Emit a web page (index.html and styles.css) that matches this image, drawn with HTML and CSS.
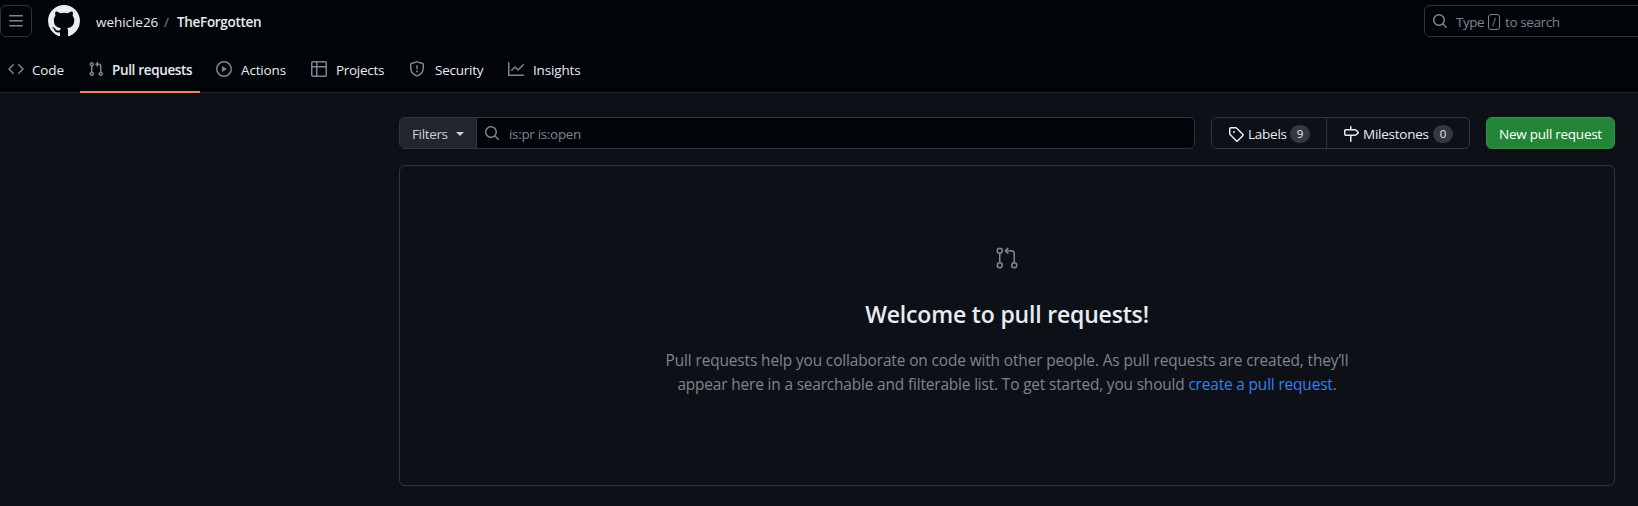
FILE: index.html
```html
<!DOCTYPE html>
<html lang="en">
<head>
<meta charset="utf-8">
<title>Pull requests · wehicle26/TheForgotten</title>
<link rel="stylesheet" href="styles.css">
</head>
<body>
<header class="header">
  <div class="topbar">
    <button class="menu-button" aria-label="Menu"><svg width="16" height="16" viewBox="0 0 16 16"><path d="M1 2.75A.75.75 0 0 1 1.75 2h12.5a.75.75 0 0 1 0 1.5H1.75A.75.75 0 0 1 1 2.75Zm0 5A.75.75 0 0 1 1.75 7h12.5a.75.75 0 0 1 0 1.5H1.75A.75.75 0 0 1 1 7.75ZM1.75 12h12.5a.75.75 0 0 1 0 1.5H1.75a.75.75 0 0 1 0-1.5Z"/></svg></button>
    <svg class="logo" width="32" height="32" viewBox="0 0 16 16"><path d="M8 0c4.42 0 8 3.58 8 8a8.013 8.013 0 0 1-5.45 7.59c-.4.08-.55-.17-.55-.38 0-.27.01-1.13.01-2.2 0-.75-.25-1.23-.54-1.48 1.78-.2 3.65-.88 3.65-3.95 0-.88-.31-1.59-.82-2.15.08-.2.36-1.02-.08-2.12 0 0-.67-.22-2.2.82-.64-.18-1.32-.27-2-.27-.68 0-1.36.09-2 .27-1.53-1.03-2.2-.82-2.2-.82-.44 1.1-.16 1.92-.08 2.12-.51.56-.82 1.28-.82 2.15 0 3.06 1.86 3.75 3.64 3.95-.23.2-.44.55-.51 1.07-.46.21-1.61.55-2.33-.66-.15-.24-.6-.83-1.23-.82-.67.01-.27.38.01.53.34.19.73.9.82 1.13.16.45.68 1.31 2.69.94 0 .67.01 1.3.01 1.49 0 .21-.15.45-.55.38A7.995 7.995 0 0 1 0 8c0-4.42 3.58-8 8-8Z"/></svg>
    <nav class="crumbs"><span class="owner">wehicle26</span><span class="slash">/</span><strong class="repo">TheForgotten</strong></nav>
    <div class="search"><svg width="16" height="16" viewBox="0 0 16 16"><path d="M10.68 11.74a6 6 0 0 1-7.922-8.982 6 6 0 0 1 8.982 7.922l3.04 3.04a.749.749 0 1 1-1.06 1.06ZM11.5 7a4.499 4.499 0 1 0-8.997 0A4.499 4.499 0 0 0 11.5 7Z"/></svg><span class="type">Type</span><kbd>/</kbd><span class="tosearch">to search</span></div>
  </div>
  <nav class="tabs">
    <a class="tab tab-code"><svg width="16" height="16" viewBox="0 0 16 16"><path d="m11.28 3.22 4.25 4.25a.75.75 0 0 1 0 1.06l-4.25 4.25a.749.749 0 1 1-1.06-1.06L13.94 8l-3.72-3.72a.749.749 0 1 1 1.06-1.06Zm-6.56 0a.751.751 0 0 1 1.06 1.06L2.06 8l3.72 3.72a.749.749 0 1 1-1.06 1.06L.47 8.53a.75.75 0 0 1 0-1.06Z"/></svg><span>Code</span></a>
    <a class="tab tab-pulls"><svg width="16" height="16" viewBox="0 0 16 16"><path d="M1.5 3.25a2.25 2.25 0 1 1 3 2.122v5.256a2.251 2.251 0 1 1-1.5 0V5.372A2.25 2.25 0 0 1 1.5 3.25Zm5.677-.177L9.573.677A.25.25 0 0 1 10 .854V2.5h1A2.5 2.5 0 0 1 13.500 5v5.628a2.251 2.251 0 1 1-1.5 0V5a1 1 0 0 0-1-1h-1v1.646a.25.25 0 0 1-.427.177L7.177 3.427a.25.25 0 0 1 0-.354ZM3.75 2.500a.75.75 0 1 0 0 1.5.75.75 0 0 0 0-1.5Zm0 9.500a.75.75 0 1 0 0 1.5.75.75 0 0 0 0-1.5Zm8.250.750a.75.75 0 1 0 1.5 0 .75.75 0 0 0-1.5 0Z"/></svg><span>Pull requests</span></a>
    <a class="tab tab-actions"><svg width="16" height="16" viewBox="0 0 16 16"><path d="M8 0a8 8 0 1 1 0 16A8 8 0 0 1 8 0ZM1.500 8a6.500 6.500 0 1 0 13 0 6.500 6.500 0 0 0-13 0Zm4.879-2.773 4.264 2.559a.25.25 0 0 1 0 .428l-4.264 2.559A.25.25 0 0 1 6 10.559V5.442a.25.25 0 0 1 .379-.215Z"/></svg><span>Actions</span></a>
    <a class="tab tab-projects"><svg width="16" height="16" viewBox="0 0 16 16"><path d="M0 1.750C0 .784.784 0 1.750 0h12.500C15.216 0 16 .784 16 1.750v12.500A1.750 1.750 0 0 1 14.250 16H1.750A1.750 1.750 0 0 1 0 14.250ZM6.500 6.500v8h7.750a.25.25 0 0 0 .25-.25V6.500Zm8-1.500V1.750a.25.25 0 0 0-.25-.25H6.500V5Zm-13 1.500v7.750c0 .138.112.25.25.25H5v-8ZM5 5V1.500H1.750a.25.25 0 0 0-.25.25V5Z"/></svg><span>Projects</span></a>
    <a class="tab tab-security"><svg width="16" height="16" viewBox="0 0 16 16"><path d="M7.467.133a1.748 1.748 0 0 1 1.066 0l5.250 1.680A1.750 1.750 0 0 1 15 3.480V7c0 1.566-.320 3.182-1.303 4.682-.983 1.498-2.585 2.813-5.032 3.855a1.697 1.697 0 0 1-1.330 0c-2.447-1.042-4.049-2.357-5.032-3.855C1.320 10.182 1 8.566 1 7V3.480a1.755 1.755 0 0 1 1.217-1.667Zm.610 1.429a.25.25 0 0 0-.153 0l-5.250 1.680a.25.25 0 0 0-.174.238V7c0 1.358.275 2.666 1.057 3.860.784 1.194 2.121 2.340 4.366 3.297a.196.196 0 0 0 .154 0c2.245-.956 3.582-2.104 4.366-3.298C13.225 9.666 13.500 8.360 13.500 7V3.480a.251.251 0 0 0-.174-.237ZM8.750 4.750v3a.75.75 0 0 1-1.500 0v-3a.75.75 0 0 1 1.500 0ZM9 10.500a1 1 0 1 1-2 0 1 1 0 0 1 2 0Z"/></svg><span>Security</span></a>
    <a class="tab tab-insights"><svg width="16" height="16" viewBox="0 0 16 16"><path d="M1.500 1.750V13.500h13.750a.75.75 0 0 1 0 1.500H.750a.75.75 0 0 1-.75-.75V1.750a.75.75 0 0 1 1.500 0Zm14.280 2.530-5.250 5.250a.75.75 0 0 1-1.060 0L7 7.060 4.280 9.780a.751.751 0 0 1-1.060-1.060l3.250-3.250a.75.75 0 0 1 1.060 0L10 7.940l4.720-4.720a.751.751 0 0 1 1.060 1.060Z"/></svg><span>Insights</span></a>
  </nav>
</header>
<main class="content">
  <div class="toolbar">
    <div class="filter">
      <button class="filters"><span>Filters</span><i class="caret"></i></button>
      <div class="query"><svg width="16" height="16" viewBox="0 0 16 16"><path d="M10.68 11.74a6 6 0 0 1-7.922-8.982 6 6 0 0 1 8.982 7.922l3.04 3.04a.749.749 0 1 1-1.06 1.06ZM11.5 7a4.499 4.499 0 1 0-8.997 0A4.499 4.499 0 0 0 11.5 7Z"/></svg><span>is:pr is:open</span></div>
    </div>
    <div class="subnav">
      <a class="labels"><svg width="16" height="16" viewBox="0 0 16 16"><path d="M1 7.775V2.750C1 1.784 1.784 1 2.750 1h5.025c.464 0 .910.184 1.238.513l6.250 6.250a1.750 1.750 0 0 1 0 2.474l-5.026 5.026a1.750 1.750 0 0 1-2.474 0l-6.250-6.250A1.752 1.752 0 0 1 1 7.775Zm1.500 0c0 .066.026.130.073.177l6.250 6.250a.25.25 0 0 0 .354 0l5.025-5.025a.25.25 0 0 0 0-.354l-6.250-6.250a.25.25 0 0 0-.177-.073H2.750a.25.25 0 0 0-.25.25ZM6 5a1 1 0 1 1 0 2 1 1 0 0 1 0-2Z"/></svg><span class="name">Labels</span><span class="count">9</span></a>
      <a class="milestones"><svg width="16" height="16" viewBox="0 0 16 16"><path d="M7.750 0a.75.75 0 0 1 .75.75V3h3.634c.414 0 .814.147 1.130.414l2.070 1.750a1.750 1.750 0 0 1 0 2.672l-2.070 1.750a1.750 1.750 0 0 1-1.130.414H8.500v5.250a.75.75 0 0 1-1.500 0V10H2.750A1.750 1.750 0 0 1 1 8.250v-3.500C1 3.784 1.784 3 2.750 3H7V.750A.75.75 0 0 1 7.750 0Zm4.384 8.500a.25.25 0 0 0 .161-.060l2.070-1.750a.248.248 0 0 0 0-.380l-2.070-1.750a.25.25 0 0 0-.161-.060H2.750a.25.25 0 0 0-.25.25v3.500c0 .138.112.25.25.25h9.384Z"/></svg><span class="name">Milestones</span><span class="count">0</span></a>
    </div>
    <button class="new"><span>New pull request</span></button>
  </div>
  <section class="blankslate">
    <svg width="24" height="24" viewBox="0 0 24 24"><path d="M16 19.250a3.250 3.250 0 1 1 6.500 0 3.250 3.250 0 0 1-6.500 0Zm-14.500 0a3.250 3.250 0 1 1 6.500 0 3.250 3.250 0 0 1-6.500 0Zm0-14.500a3.250 3.250 0 1 1 6.500 0 3.250 3.250 0 0 1-6.500 0ZM4.750 3a1.750 1.750 0 1 0 .001 3.501A1.750 1.750 0 0 0 4.750 3Zm0 14.500a1.750 1.750 0 1 0 .001 3.501A1.750 1.750 0 0 0 4.750 17.500Zm14.500 0a1.750 1.750 0 1 0 .001 3.501 1.750 1.750 0 0 0-.001-3.501Z"/><path d="M13.405 1.720a.75.75 0 0 1 0 1.060L12.185 4h4.065A3.750 3.750 0 0 1 20 7.750v8.750a.75.75 0 0 1-1.500 0V7.750a2.250 2.250 0 0 0-2.250-2.250h-4.064l1.220 1.220a.75.75 0 0 1-1.061 1.060l-2.500-2.500a.75.75 0 0 1 0-1.060l2.500-2.500a.75.75 0 0 1 1.060 0ZM4.750 7.250A.75.75 0 0 1 5.500 8v8A.75.75 0 0 1 4 16V8a.75.75 0 0 1 .75-.75Z"/></svg>
    <h3>Welcome to pull requests!</h3>
    <p><span class="line1">Pull requests help you collaborate on code with other people. As pull requests are created, they’ll</span><br><span class="line2">appear here in a searchable and filterable list. To get started, you should <a>create a pull request</a>.</span></p>
  </section>
</main>
</body>
</html>
```

FILE: styles.css
```css
* { box-sizing: border-box; }
body { margin: 0; height: 506px; overflow: hidden; background: #0d1117; color: #e6edf3; font: 13.5px/20px "Open Sans", "Noto Sans", sans-serif; white-space: nowrap; }
svg { display: block; flex: none; fill: #7d8590; }
button { font: inherit; color: inherit; padding: 0; margin: 0; }

.header { height: 93px; background: #010409; border-bottom: 1px solid #21262d; }
.topbar { display: flex; align-items: center; height: 42px; }
.menu-button { width: 32px; height: 32px; display: flex; align-items: center; justify-content: center; background: none; border: 1px solid #30363d; border-radius: 6px; }
.logo { margin-left: 16px; fill: #e6edf3; }
.crumbs { display: flex; margin-left: 16px; padding-top: 2px; }
.owner { width: 60px; letter-spacing: -.04px; }
.slash { width: 21px; padding-left: 8px; color: #7d8590; }
.repo { font-weight: 600; letter-spacing: -.32px; }
.search { display: flex; align-items: center; width: 222px; height: 32px; margin-left: auto; margin-right: -8px; padding-left: 7px; border: 1px solid #30363d; border-radius: 6px; color: #7d8590; }
.type { width: 32px; margin-left: 8px; padding-top: 2px; letter-spacing: -.5px; }
kbd { width: 12px; height: 16px; margin-top: 2px; border: 1px solid #7d8590; border-radius: 3px; font: 11px/14px "Open Sans", sans-serif; text-align: center; }
.tosearch { margin-left: 5px; padding-top: 2px; letter-spacing: -.4px; }

.tabs { display: flex; gap: 8px; height: 51px; }
.tab { display: flex; gap: 9px; height: 51px; padding: 19px 8px 0; letter-spacing: -.15px; }
.tab span { margin-top: -3px; line-height: 24px; }
.tab-code { width: 72px; gap: 8px; }
.tab-pulls { width: 120px; gap: 8px; font-weight: 600; letter-spacing: -.34px; border-bottom: 2px solid #f78166; }
.tab-actions { width: 87px; }
.tab-projects { width: 90px; letter-spacing: -.3px; }
.tab-security { width: 91px; gap: 10px; letter-spacing: -.25px; }

.content { width: 1216px; margin: 24px 0 0 399px; }
.toolbar { display: flex; height: 32px; }
.filter { display: flex; width: 796px; border: 1px solid #30363d; border-radius: 6px; overflow: hidden; }
.filters { display: flex; align-items: center; width: 77px; padding-left: 12px; background: #21262d; border: 0; border-right: 1px solid #30363d; color: #c9d1d9; }
.filters span { width: 44px; text-align: left; padding-top: 2px; letter-spacing: -.35px; }
.caret { margin-top: 1px; border: 4px solid transparent; border-top-color: #c9d1d9; border-bottom: 0; }
.query { display: flex; flex: 1; align-items: center; gap: 9px; padding-left: 7px; background: #010409; color: #7d8590; }
.query span { padding-top: 2px; letter-spacing: -.33px; }
.subnav { display: flex; width: 259px; margin-left: 16px; border: 1px solid #30363d; border-radius: 6px; }
.subnav a { display: flex; align-items: center; padding-left: 16px; }
.subnav svg { fill: #e6edf3; margin-top: 1px; }
.labels { width: 115px; border-right: 1px solid #30363d; }
.name { margin-left: 4px; padding-top: 2px; letter-spacing: -.25px; }
.labels .name { width: 42px; }
.milestones .name { width: 70px; }
.count { width: 20px; height: 18px; margin-top: 2px; border-radius: 9px; background: rgba(110,118,129,.4); font-size: 11.5px; line-height: 18px; text-align: center; }
.new { width: 129px; margin-left: 16px; padding-top: 1px; border: 1px solid #379144; border-radius: 6px; background: #238636; color: #fff; letter-spacing: -.26px; }

.blankslate { height: 321px; margin-top: 16px; padding-top: 80px; border: 1px solid #30363d; border-radius: 6px; text-align: center; }
.blankslate svg { margin: 0 auto; }
h3 { margin: 26px 0 0; font-size: 23px; line-height: 36px; font-weight: 600; letter-spacing: -.18px; }
p { margin: 17px 0 0; color: #7d8590; font-size: 15.4px; line-height: 24px; }
.line1 { letter-spacing: -.11px; }
.line2 { letter-spacing: -.15px; }
p a { color: #2f81f7; }
```
